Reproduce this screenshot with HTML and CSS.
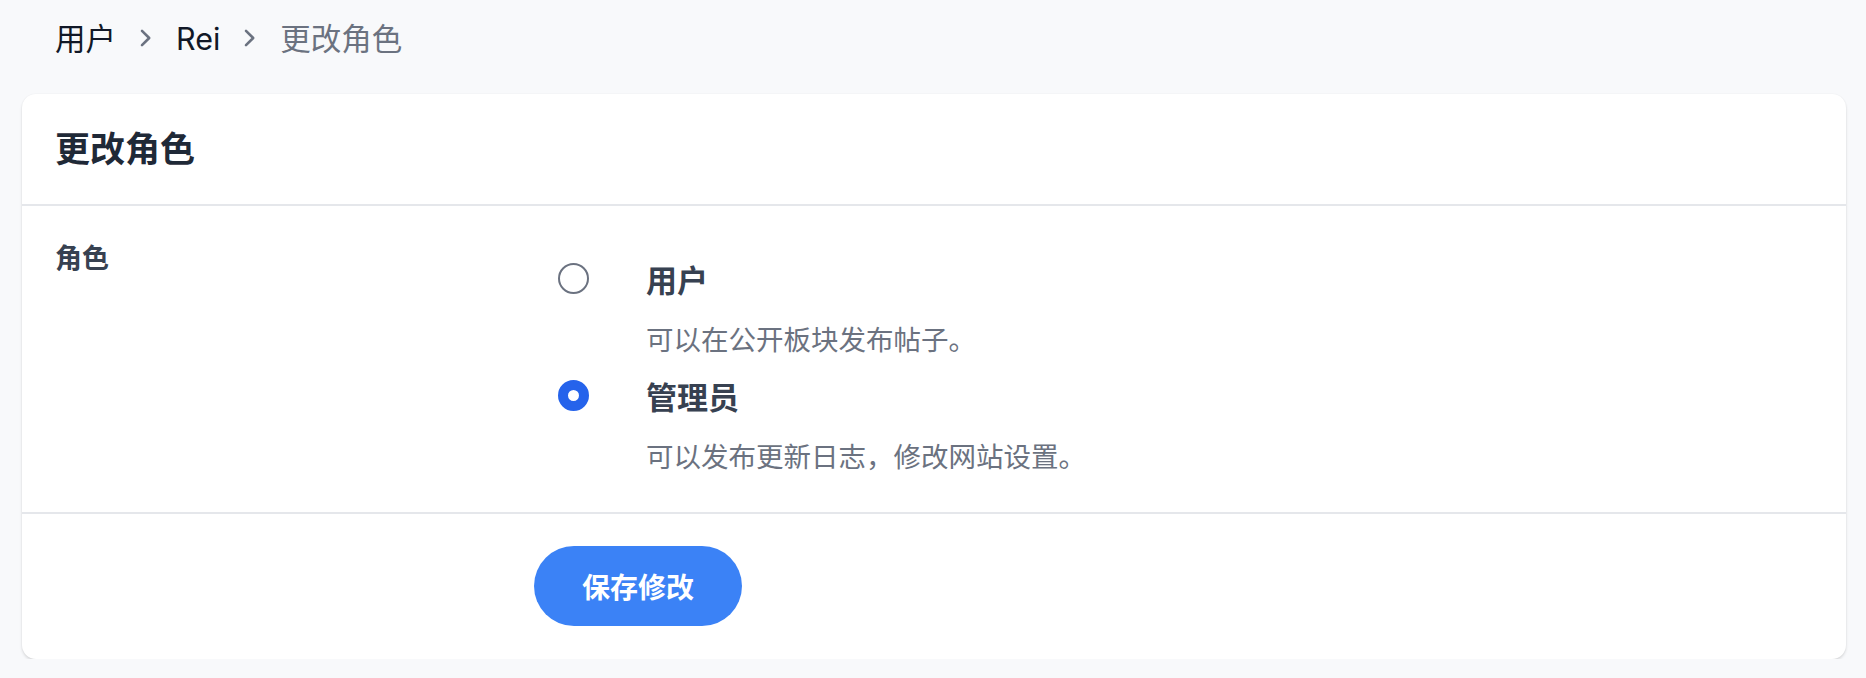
FILE: index.html
```html
<!DOCTYPE html>
<html lang="zh-CN">
<head>
  <meta charset="UTF-8">
  <meta name="viewport" content="width=device-width, initial-scale=1.0">
  <title>更改角色</title>
  <link rel="stylesheet" href="styles.css">
</head>
<body>
  <nav class="crumbs">
    <a href="#">用户</a>
    <svg class="chev" viewBox="0 0 20 20" width="20" height="20"><path d="M6 2.8 13.2 10 6 17.2" fill="none" stroke="currentColor" stroke-width="2.6" stroke-linecap="round" stroke-linejoin="round"/></svg>
    <a href="#">Rei</a>
    <svg class="chev" viewBox="0 0 20 20" width="20" height="20"><path d="M6 2.8 13.2 10 6 17.2" fill="none" stroke="currentColor" stroke-width="2.6" stroke-linecap="round" stroke-linejoin="round"/></svg>
    <span class="current">更改角色</span>
  </nav>

  <form class="card">
    <div class="card-head">
      <h2>更改角色</h2>
    </div>

    <div class="card-body">
      <div class="field-label">角色</div>
      <div class="options">
        <label class="option">
          <input type="radio" name="role" value="user">
          <span class="option-text">
            <span class="option-title">用户</span>
            <span class="option-desc">可以在公开板块发布帖子。</span>
          </span>
        </label>
        <label class="option">
          <input type="radio" name="role" value="admin" checked>
          <span class="option-text">
            <span class="option-title">管理员</span>
            <span class="option-desc">可以发布更新日志，修改网站设置。</span>
          </span>
        </label>
      </div>
    </div>

    <div class="card-foot">
      <button type="submit">保存修改</button>
    </div>
  </form>
</body>
</html>
```

FILE: styles.css
```css
* {
  box-sizing: border-box;
  font-family: Inter, "Noto Sans CJK SC", sans-serif;
}

body {
  margin: 0;
  padding: 0 20px 0 22px;
  background-color: #f8f9fb;
}

.crumbs {
  display: flex;
  align-items: flex-start;
  gap: 20px;
  padding: 16px 0 0 33px;
  height: 94px;
  font-size: 30.5px;
  line-height: 45px;

  a {
    color: #111827;
    text-decoration: none;
  }

  .chev {
    color: #6b7280;
    margin-top: 12px;
  }

  .current {
    color: #6b7280;
  }
}

.card {
  background-color: white;
  border-radius: 14px;
  box-shadow: 0 2px 3px rgba(0, 0, 0, 0.12), 0 0 2px rgba(0, 0, 0, 0.05);
  overflow: hidden;
}

.card-head {
  padding: 32px 33px;
  border-bottom: 2px solid #e5e7eb;

  h2 {
    margin: 0;
    font-size: 35px;
    line-height: 46px;
    font-weight: 700;
    color: #1f2937;
  }
}

.card-body {
  display: flex;
  padding: 33px 33px 35px;
  border-bottom: 2px solid #e5e7eb;
}

.field-label {
  width: 503px;
  flex-shrink: 0;
  font-size: 27px;
  line-height: 39px;
  font-weight: 600;
  color: #374151;
}

.options {
  display: flex;
  flex-direction: column;
  gap: 15px;
  padding-top: 19px;
}

.option {
  display: flex;
  align-items: flex-start;
  cursor: pointer;

  input {
    appearance: none;
    width: 31px;
    height: 31px;
    margin: 5px 57px 0 0;
    border: 2px solid #6b7280;
    border-radius: 50%;
    background-color: white;
    cursor: pointer;

    &:checked {
      border: 10px solid #2563eb;
    }
  }
}

.option-text {
  display: flex;
  flex-direction: column;
  gap: 18px;
}

.option-title {
  font-size: 31px;
  line-height: 45px;
  font-weight: 600;
  color: #374151;
}

.option-desc {
  font-size: 27.5px;
  line-height: 39px;
  color: #6b7280;
}

.card-foot {
  padding: 32px 0 33px 512px;

  button {
    width: 208px;
    height: 80px;
    border: none;
    border-radius: 40px;
    background-color: #3b82f6;
    color: white;
    font-size: 28px;
    font-weight: 700;
    cursor: pointer;
  }
}
```
